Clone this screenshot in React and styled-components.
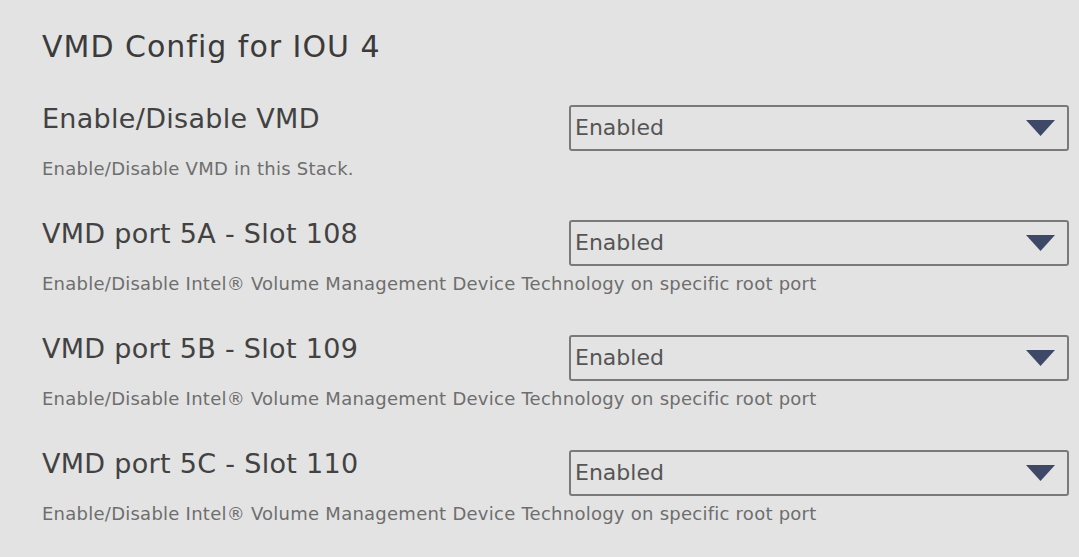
import React from "react";
import styled, { createGlobalStyle } from "styled-components";

const Global = createGlobalStyle`
  html, body { margin: 0; padding: 0; background: #e3e3e3; }
  body { font-family: "DejaVu Sans", "Open Sans", sans-serif; }
`;

const Page = styled.div`
  width: 1079px;
  height: 557px;
  box-sizing: border-box;
  padding: 29px 10px 0 42px;
  background: #e3e3e3;
  overflow: hidden;
`;

const Title = styled.h1`
  margin: 0 0 38px 0;
  font-size: 30px;
  line-height: 36px;
  font-weight: 400;
  letter-spacing: 1px;
  color: #3b3b3b;
`;

const Row = styled.div`
  display: grid;
  grid-template-columns: 527px 500px;
  grid-template-rows: 32px auto;
  row-gap: 22px;
  height: 115px;
`;

const Label = styled.div`
  font-size: 27px;
  line-height: 32px;
  letter-spacing: 0.3px;
  color: #424242;
  white-space: nowrap;
`;

const Desc = styled.div`
  grid-column: 1 / span 2;
  font-size: 18px;
  line-height: 24px;
  letter-spacing: 0.25px;
  color: #6e6e6e;
  white-space: nowrap;
`;

const Select = styled.div`
  grid-column: 2;
  grid-row: 1;
  margin-top: 2px;
  height: 46px;
  box-sizing: border-box;
  border: 2px solid #7a7a7a;
  border-radius: 3px;
  display: flex;
  align-items: center;
  justify-content: space-between;
  padding: 0 12px 0 4px;
`;

const Value = styled.span`
  font-size: 22px;
  line-height: 30px;
  color: #555555;
`;

const Arrow = styled.svg`
  width: 29px;
  height: 16px;
  display: block;
`;

const items = [
  { label: "Enable/Disable VMD", desc: "Enable/Disable VMD in this Stack." },
  { label: "VMD port 5A - Slot 108", desc: "Enable/Disable Intel® Volume Management Device Technology on specific root port" },
  { label: "VMD port 5B - Slot 109", desc: "Enable/Disable Intel® Volume Management Device Technology on specific root port" },
  { label: "VMD port 5C - Slot 110", desc: "Enable/Disable Intel® Volume Management Device Technology on specific root port" },
];

export default function App() {
  return (
    <>
      <Global />
      <Page>
        <Title>VMD Config for IOU 4</Title>
        {items.map((it) => (
          <Row key={it.label}>
            <Label>{it.label}</Label>
            <Select>
              <Value>Enabled</Value>
              <Arrow viewBox="0 0 29 16">
                <polygon points="0,0 29,0 14.5,16" fill="#3d4966" />
              </Arrow>
            </Select>
            <Desc>{it.desc}</Desc>
          </Row>
        ))}
      </Page>
    </>
  );
}
